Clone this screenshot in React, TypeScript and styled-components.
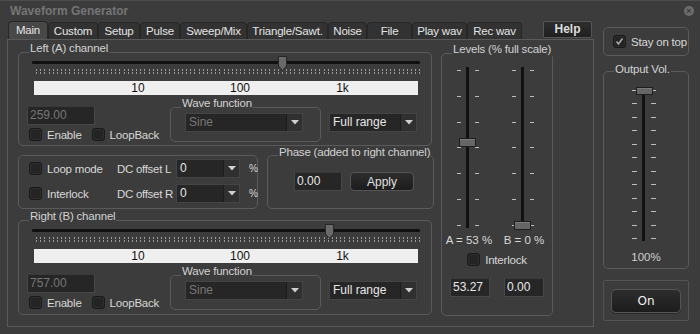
import React from 'react';
import styled, { createGlobalStyle } from 'styled-components';

const BG = '#3c3c3c';
const LINE = '#5a5a5a';

const GlobalStyle = createGlobalStyle`
  * { box-sizing: border-box; }
  html, body { margin: 0; padding: 0; background: ${BG}; }
  body { font-family: "Liberation Sans", Arial, sans-serif; }
`;

const Window = styled.div`
  width: 700px;
  height: 334px;
  background: ${BG};
  color: #d8d8d8;
  font-size: 11px;
  overflow: hidden;
`;

const TitleBar = styled.div`
  height: 20px;
  display: flex;
  align-items: center;
  justify-content: space-between;
  padding: 0 6px 0 10px;
  border-top: 1px solid #4d4d4d;
`;

const Title = styled.span`
  font-weight: bold;
  font-size: 12px;
  color: #757575;
`;

const CloseDot = styled.span`
  width: 10px;
  height: 10px;
  border-radius: 50%;
  background: #6c6c6c;
  color: #3a3a3a;
  font-size: 9px;
  line-height: 10px;
  text-align: center;
  font-weight: bold;
`;

const Body = styled.div`
  display: flex;
  align-items: flex-start;
`;

const MainCol = styled.div`
  margin-left: 7px;
  width: 587px;
`;

const TabRow = styled.div`
  height: 19px;
  display: flex;
  align-items: flex-end;
  padding-left: 1px;
`;

const Tab = styled.div<{ $w: number; $active?: boolean }>`
  width: ${p => p.$w}px;
  height: ${p => (p.$active ? 18 : 17)}px;
  border: 1px solid #272727;
  border-bottom: none;
  border-radius: 4px 4px 0 0;
  background: ${p => (p.$active ? '#484848' : '#323232')};
  color: #e4e4e4;
  text-align: center;
  line-height: 16px;
  font-size: 11.5px;
  letter-spacing: -0.2px;
  white-space: nowrap;
`;

const HelpButton = styled.div`
  margin-left: 21px;
  margin-bottom: 1px;
  width: 49px;
  height: 17px;
  border: 1px solid #555;
  border-radius: 2px;
  background: linear-gradient(#2e2e2e, #1f1f1f);
  color: #dedede;
  font-weight: bold;
  font-size: 12px;
  line-height: 15px;
  text-align: center;
`;

const Pane = styled.div`
  height: 288px;
  border: 1px solid ${LINE};
  display: flex;
  align-items: flex-start;
  padding: 12px 0 0 10px;
`;

const LeftStack = styled.div`
  width: 414px;
  display: flex;
  flex-direction: column;
`;

const Group = styled.div<{ $w?: number; $h: number }>`
  position: relative;
  flex-shrink: 0;
  width: ${p => (p.$w ? `${p.$w}px` : 'auto')};
  height: ${p => p.$h}px;
  border: 1px solid ${LINE};
  border-radius: 5px;
`;

const Legend = styled.span<{ $top?: number }>`
  position: absolute;
  top: ${p => p.$top ?? -11}px;
  left: 10px;
  padding: 0 1px;
  background: ${BG};
  color: #d2d2d2;
  line-height: 13px;
  font-size: 11.5px;
  letter-spacing: -0.2px;
  white-space: nowrap;
`;

const ChannelBox = styled(Group)<{ $mt: number }>`
  margin-top: ${p => p.$mt}px;
  padding: 8px 0 0 8px;
`;

const SliderBlock = styled.div`
  position: relative;
  margin-left: 5px;
  width: 388px;
`;

const HTrack = styled.div`
  height: 3px;
  background: #111;
  border-radius: 1px;
`;

const HThumb = styled.svg`
  position: absolute;
  top: -5px;
`;

const TickStrip = styled.svg`
  display: block;
  margin: 5px 0 0 3.5px;
`;

const Scale = styled.div`
  position: relative;
  margin: 7px 0 0 2px;
  width: 384px;
  height: 14px;
  background: #efefef;
`;

const ScaleLabel = styled.span`
  position: absolute;
  top: 0;
  transform: translateX(-50%);
  color: #111;
  font-size: 12px;
  line-height: 14px;
`;

const BottomRow = styled.div`
  margin-top: 11px;
  display: flex;
  align-items: flex-start;
`;

const FreqCol = styled.div`
  width: 143px;
  display: flex;
  flex-direction: column;
`;

const CheckRow = styled.div`
  margin: 3px 0 0 2px;
  display: flex;
  gap: 10px;
`;

const WaveBox = styled(Group)`
  margin-top: 1px;
  padding: 5px 0 0 14px;
`;

const FullRangeSlot = styled.div`
  margin: 7px 0 0 8px;
`;

const Field = styled.div<{ $w: number; $dim?: boolean }>`
  width: ${p => p.$w}px;
  height: 19px;
  background: #262626;
  border: 1px solid #474747;
  border-top-color: #3a3a3a;
  padding-left: 2px;
  line-height: 17px;
  font-size: 12px;
  color: ${p => (p.$dim ? '#767676' : '#e8e8e8')};
`;

const SelectBox = styled.div<{ $w: number; $dim?: boolean }>`
  width: ${p => p.$w}px;
  height: 19px;
  display: flex;
  background: #262626;
  border: 1px solid #444;
  color: ${p => (p.$dim ? '#777' : '#e6e6e6')};
  font-size: 12px;
`;

const SelectText = styled.span`
  flex: 1;
  padding-left: 3px;
  line-height: 17px;
  white-space: nowrap;
`;

const SelectArrow = styled.span`
  width: 16px;
  background: #303030;
  border-left: 1px solid #1c1c1c;
  display: flex;
  align-items: center;
  justify-content: center;
`;

const CheckLabel = styled.label`
  display: inline-flex;
  align-items: center;
  gap: 5px;
  white-space: nowrap;
  font-size: 11.5px;
  letter-spacing: -0.2px;
`;

const Box = styled.span`
  width: 13px;
  height: 13px;
  flex-shrink: 0;
  background: #242424;
  border: 1px solid #1a1a1a;
  border-radius: 3px;
  box-shadow: inset 0 0 0 1px #2e2e2e;
  display: flex;
  align-items: center;
  justify-content: center;
`;

const MidRow = styled.div`
  margin-top: 9px;
  display: flex;
  gap: 9px;
`;

const LoopBox = styled(Group)`
  padding: 3px 0 0 10px;
  display: grid;
  grid-template-columns: 88px 59px 64px auto;
  grid-auto-rows: 19px;
  row-gap: 6px;
  align-items: center;
  align-content: start;
`;

const DcLabel = styled.span`
  white-space: nowrap;
  font-size: 11.5px;
  letter-spacing: -0.3px;
`;

const Percent = styled.span`
  margin-left: 9px;
  font-size: 10px;
`;

const PhaseBox = styled(Group)`
  padding: 16px 0 0 26px;
  display: flex;
  gap: 8px;
  align-items: flex-start;
`;

const PushButton = styled.div<{ $w: number; $h: number }>`
  width: ${p => p.$w}px;
  height: ${p => p.$h}px;
  border: 1px solid #545454;
  border-radius: 4px;
  background: linear-gradient(#2d2d2d, #1c1c1c);
  color: #e0e0e0;
  font-size: 12px;
  display: flex;
  align-items: center;
  justify-content: center;
`;

const LevelsBox = styled(Group)`
  margin: 1px 0 0 9px;
  padding-top: 13px;
  display: flex;
  flex-direction: column;
  align-items: stretch;
`;

const LevelsRow = styled.div`
  display: flex;
  gap: 10px;
  padding-left: 3px;
`;

const LevelCol = styled.div`
  width: 45px;
  display: flex;
  flex-direction: column;
  align-items: center;
`;

const LevelText = styled.span`
  margin-top: 6px;
  line-height: 13px;
  padding-left: 3px;
  white-space: nowrap;
  font-size: 11.5px;
`;

const CenterRow = styled.div<{ $mt: number; $gap?: number }>`
  margin-top: ${p => p.$mt}px;
  display: flex;
  justify-content: center;
  gap: ${p => p.$gap ?? 0}px;
`;

const VSliderWrap = styled.div`
  position: relative;
`;

const VThumb = styled.div<{ $h: number }>`
  position: absolute;
  width: 17px;
  height: ${p => p.$h}px;
  background: #666;
  border: 1px solid #1e1e1e;
  box-shadow: inset 0 1px 0 #7a7a7a;
`;

const SideCol = styled.div`
  margin: 7px 0 0 9px;
  width: 86px;
  display: flex;
  flex-direction: column;
`;

const StayBox = styled(Group)`
  display: flex;
  align-items: center;
  padding-left: 9px;
`;

const OutBox = styled(Group)`
  margin-top: 15px;
  padding: 16px 4px 0 0;
  display: flex;
  flex-direction: column;
  align-items: center;
`;

const OutText = styled.span`
  margin-top: 10px;
  padding-left: 4px;
  line-height: 13px;
  color: #cfcfcf;
  font-size: 11.5px;
`;

const OnBox = styled.div`
  margin-top: 11px;
  height: 41px;
  border: 1px solid #545454;
  border-radius: 2px;
  display: flex;
  align-items: center;
  justify-content: center;
`;

const OnButton = styled(PushButton)`
  font-family: "DejaVu Sans", sans-serif;
  font-size: 12px;
  color: #f0f0f0;
  border-radius: 5px;
  box-shadow: 0 1px 0 #2a2a2a;
`;

function Arrow() {
  return (
    <svg width="8" height="5" viewBox="0 0 8 5">
      <polygon points="0,0 8,0 4,4.5" fill="#cfcfcf" />
    </svg>
  );
}

function Select({ w, value, dim }: { w: number; value: string; dim?: boolean }) {
  return (
    <SelectBox $w={w} $dim={dim}>
      <SelectText>{value}</SelectText>
      <SelectArrow>
        <Arrow />
      </SelectArrow>
    </SelectBox>
  );
}

function Check({ label, checked }: { label: string; checked?: boolean }) {
  return (
    <CheckLabel>
      <Box>
        {checked && (
          <svg width="9" height="9" viewBox="0 0 9 9">
            <polyline points="1.5,4.5 3.5,7 7.5,1.5" fill="none" stroke="#a8a8a8" strokeWidth="1.6" />
          </svg>
        )}
      </Box>
      {label}
    </CheckLabel>
  );
}

const TICK_COUNT = 93;
const TICK_STEP = 4.168;

function Ticks() {
  return (
    <TickStrip width={384} height={5}>
      {Array.from({ length: TICK_COUNT }, (_, i) => {
        const x = Math.round(i * TICK_STEP) + 0.5;
        return <line key={i} x1={x} x2={x} y1={0} y2={5} stroke="#9c9c9c" strokeDasharray="2 1" />;
      })}
    </TickStrip>
  );
}

function Channel({ title, freq, mt, h }: { title: string; freq: number; mt: number; h: number }) {
  const pos = 208 + (Math.log10(freq) - 2) * 102;
  return (
    <ChannelBox $h={h} $mt={mt}>
      <Legend>{title}</Legend>
      <SliderBlock>
        <HTrack />
        <HThumb width={9} height={15} viewBox="0 0 9 15" style={{ left: pos - 4.5 }}>
          <polygon points="0.5,0.5 8.5,0.5 8.5,10 4.5,14.5 0.5,10" fill="#6a6a6a" stroke="#262626" />
        </HThumb>
        <Ticks />
        <Scale>
          <ScaleLabel style={{ left: 104 }}>10</ScaleLabel>
          <ScaleLabel style={{ left: 206 }}>100</ScaleLabel>
          <ScaleLabel style={{ left: 308.5 }}>1k</ScaleLabel>
        </Scale>
      </SliderBlock>
      <BottomRow>
        <FreqCol>
          <Field $w={68} $dim>
            {freq.toFixed(2)}
          </Field>
          <CheckRow>
            <Check label="Enable" />
            <Check label="LoopBack" />
          </CheckRow>
        </FreqCol>
        <WaveBox $w={151} $h={35}>
          <Legend>Wave function</Legend>
          <Select w={118} value="Sine" dim />
        </WaveBox>
        <FullRangeSlot>
          <Select w={88} value="Full range" />
        </FullRangeSlot>
      </BottomRow>
    </ChannelBox>
  );
}

type VSliderProps = {
  w: number;
  h: number;
  trackX: number;
  dashL: number;
  dashR: number;
  dashW: number;
  ys: number[];
  value: number;
  thumbX: number;
  thumbH: number;
};

function VSlider({ w, h, trackX, dashL, dashR, dashW, ys, value, thumbX, thumbH }: VSliderProps) {
  const center = 3 + (1 - value) * (h - 6);
  return (
    <VSliderWrap style={{ width: w, height: h }}>
      <svg width={w} height={h} style={{ display: 'block' }}>
        <rect x={trackX} y={0} width={3} height={h} fill="#111" />
        {ys.map(y => (
          <g key={y}>
            <rect x={dashL} y={Math.round(y)} width={dashW} height={1} fill="#bdbdbd" />
            <rect x={dashR} y={Math.round(y)} width={dashW} height={1} fill="#bdbdbd" />
          </g>
        ))}
      </svg>
      <VThumb $h={thumbH} style={{ left: thumbX, top: Math.round(center - thumbH / 2) }} />
    </VSliderWrap>
  );
}

const levelYs = Array.from({ length: 7 }, (_, k) => 3 + k * 25.8);
const outYs = Array.from({ length: 12 }, (_, k) => 2 + k * 13.45);

const tabs = [
  { label: 'Main', w: 40, active: true },
  { label: 'Custom', w: 50 },
  { label: 'Setup', w: 42 },
  { label: 'Pulse', w: 40 },
  { label: 'Sweep/Mix', w: 67 },
  { label: 'Triangle/Sawt.', w: 81 },
  { label: 'Noise', w: 39 },
  { label: 'File', w: 45 },
  { label: 'Play wav', w: 55 },
  { label: 'Rec wav', w: 55 },
];

export default function App() {
  return (
    <Window>
      <GlobalStyle />
      <TitleBar>
        <Title>Waveform Generator</Title>
        <CloseDot>×</CloseDot>
      </TitleBar>
      <Body>
        <MainCol>
          <TabRow>
            {tabs.map(t => (
              <Tab key={t.label} $w={t.w} $active={t.active}>
                {t.label}
              </Tab>
            ))}
            <HelpButton>Help</HelpButton>
          </TabRow>
          <Pane>
            <LeftStack>
              <Channel title="Left (A) channel" freq={259} mt={0} h={94} />
              <MidRow>
                <LoopBox $w={240} $h={54}>
                  <Check label="Loop mode" />
                  <DcLabel>DC offset L</DcLabel>
                  <Select w={64} value="0" />
                  <Percent>%</Percent>
                  <Check label="Interlock" />
                  <DcLabel>DC offset R</DcLabel>
                  <Select w={64} value="0" />
                  <Percent>%</Percent>
                </LoopBox>
                <PhaseBox $w={167} $h={54}>
                  <Legend $top={-10}>Phase (added to right channel)</Legend>
                  <Field $w={48}>0.00</Field>
                  <PushButton $w={64} $h={19}>Apply</PushButton>
                </PhaseBox>
              </MidRow>
              <Channel title="Right (B) channel" freq={757} mt={11} h={95} />
            </LeftStack>
            <LevelsBox $w={112} $h={263}>
              <Legend>Levels (% full scale)</Legend>
              <LevelsRow>
                <LevelCol>
                  <VSlider w={22} h={161} trackX={9} dashL={0} dashR={18} dashW={4} ys={levelYs} value={0.5327} thumbX={2} thumbH={9} />
                  <LevelText>A = 53 %</LevelText>
                </LevelCol>
                <LevelCol>
                  <VSlider w={22} h={161} trackX={9} dashL={0} dashR={18} dashW={4} ys={levelYs} value={0} thumbX={2} thumbH={9} />
                  <LevelText>B = 0 %</LevelText>
                </LevelCol>
              </LevelsRow>
              <CenterRow $mt={6}>
                <Check label="Interlock" />
              </CenterRow>
              <CenterRow $mt={12} $gap={14}>
                <Field $w={40}>53.27</Field>
                <Field $w={40}>0.00</Field>
              </CenterRow>
            </LevelsBox>
          </Pane>
        </MainCol>
        <SideCol>
          <StayBox $h={29}>
            <Check label="Stay on top" checked />
          </StayBox>
          <OutBox $h={198}>
            <Legend $top={-9}>Output Vol.</Legend>
            <VSlider w={24} h={153} trackX={10} dashL={0} dashR={19} dashW={5} ys={outYs} value={1} thumbX={4} thumbH={8} />
            <OutText>100%</OutText>
          </OutBox>
          <OnBox>
            <OnButton $w={70} $h={24}>On</OnButton>
          </OnBox>
        </SideCol>
      </Body>
    </Window>
  );
}
